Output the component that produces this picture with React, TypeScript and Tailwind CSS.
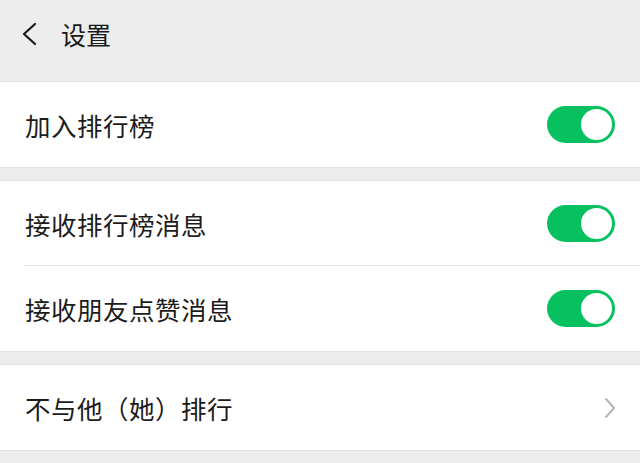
import React from "react";

const font = { fontFamily: '"Noto Sans CJK SC", "Noto Sans", sans-serif' };

function Toggle() {
  return (
    <div className="w-[68px] h-[37px] rounded-full bg-[#07c160] flex items-center justify-end pr-[3px]">
      <div className="w-[31px] h-[31px] rounded-full bg-white" />
    </div>
  );
}

function Chevron() {
  return (
    <svg width="14" height="22" viewBox="0 0 14 22" fill="none">
      <path d="M3 2 L11 11 L3 20" stroke="#b5b5b5" strokeWidth="2" strokeLinecap="round" strokeLinejoin="round" />
    </svg>
  );
}

function Row({ label, right, divider }: { label: string; right: React.ReactNode; divider?: boolean }) {
  return (
    <div className="relative h-[85px] bg-white flex items-center pl-[25px] pr-[25px] justify-between">
      <span className="text-[25.5px] text-[#1c1c1c] leading-none tracking-[0.5px]">{label}</span>
      {right}
      {divider && <div className="absolute left-[24px] right-0 bottom-0 h-px bg-[#e6e6e6]" />}
    </div>
  );
}

export default function App() {
  return (
    <div className="w-[640px] h-[463px] bg-[#ededed] overflow-hidden" style={font}>
      <div className="h-[68px] flex items-center pl-[21px]">
        <svg width="17" height="24" viewBox="0 0 17 24" fill="none">
          <path d="M14 2 L3 12 L14 22" stroke="#1a1a1a" strokeWidth="2.2" strokeLinecap="round" strokeLinejoin="round" />
        </svg>
        <span className="ml-[23px] text-[25px] text-[#191919] leading-none">设置</span>
      </div>
      <div className="h-[14px] border-b border-[#e2e2e2]" />
      <Row label="加入排行榜" right={<Toggle />} />
      <div className="h-[14px] border-y border-[#e2e2e2]" />
      <Row label="接收排行榜消息" right={<Toggle />} divider />
      <Row label="接收朋友点赞消息" right={<Toggle />} />
      <div className="h-[14px] border-y border-[#e2e2e2]" />
      <Row label="不与他（她）排行" right={<div className="mr-[-2px]"><Chevron /></div>} />
      <div className="h-[14px] border-t border-[#e2e2e2]" />
    </div>
  );
}
